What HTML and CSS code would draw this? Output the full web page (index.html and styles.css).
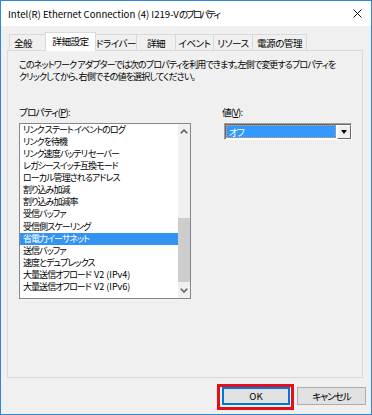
FILE: index.html
```html
<!DOCTYPE html>
<html lang="ja">
<head>
<meta charset="utf-8">
<title>Intel(R) Ethernet Connection (4) I219-Vのプロパティ</title>
<link rel="stylesheet" href="styles.css">
</head>
<body>
<div class="window">
  <div class="titlebar">
    <span class="title">Intel(R) Ethernet Connection (4) I219-V<span class="title-ja">のプロパティ</span></span>
    <svg class="close" width="9" height="9" viewBox="0 0 9 9"><path d="M0.5 0.5 L8.5 8.5 M8.5 0.5 L0.5 8.5" stroke="#111" stroke-width="1" fill="none"/></svg>
  </div>
  <div class="content">
    <div class="tabs">
      <div class="tab tab-general">全般</div>
      <div class="tab tab-advanced active">詳細設定</div>
      <div class="tab tab-driver">ドライバー</div>
      <div class="tab tab-details">詳細</div>
      <div class="tab tab-events">イベント</div>
      <div class="tab tab-resources">リソース</div>
      <div class="tab tab-power">電源の管理</div>
    </div>
    <div class="panel">
      <p class="desc"><span class="desc-line">このネットワーク アダプターでは次のプロパティを利用できます。左側で変更するプロパティを</span><span class="desc-line">クリックしてから、右側でその値を選択してください。</span></p>
      <div class="fields">
        <div class="prop-col">
          <div class="label prop-label">プロパティ(<u>P</u>):</div>
          <div class="listbox">
            <ul class="items">
              <li>リンク ステート イベントのログ</li>
              <li>リンクを待機</li>
              <li>リンク速度バッテリ セーバー</li>
              <li>レガシースイッチ互換モード</li>
              <li>ローカル管理されるアドレス</li>
              <li>割り込み加減</li>
              <li>割り込み加減率</li>
              <li>受信バッファ</li>
              <li>受信側スケーリング</li>
              <li class="selected">省電力イーサネット</li>
              <li>送信バッファ</li>
              <li>速度とデュプレックス</li>
              <li>大量送信オフロード<span class="lat"> V2 (IPv4)</span></li>
              <li>大量送信オフロード<span class="lat"> V2 (IPv6)</span></li>
            </ul>
            <div class="scrollbar">
              <div class="sb-btn"><svg width="8" height="5" viewBox="0 0 8 5"><path d="M0.8 4.2 L4 1 L7.2 4.2" stroke="#505050" stroke-width="1.4" fill="none"/></svg></div>
              <div class="sb-track"><div class="sb-thumb"></div></div>
              <div class="sb-btn"><svg width="8" height="5" viewBox="0 0 8 5"><path d="M0.8 0.8 L4 4 L7.2 0.8" stroke="#505050" stroke-width="1.4" fill="none"/></svg></div>
            </div>
          </div>
        </div>
        <div class="value-col">
          <div class="label value-label">値(<u>V</u>):</div>
          <div class="combo">
            <div class="combo-value"><span class="combo-sel">オフ</span></div>
            <div class="combo-btn"><span class="tri"></span></div>
          </div>
        </div>
      </div>
    </div>
    <div class="buttons">
      <button class="btn btn-default">OK<span class="mark"></span></button>
      <button class="btn btn-cancel">キャンセル</button>
    </div>
  </div>
</div>
</body>
</html>
```
FILE: styles.css
```css
* { box-sizing: border-box; }
html, body { margin: 0; padding: 0; }
body {
  width: 372px;
  height: 415px;
  overflow: hidden;
  font-family: "Noto Sans CJK JP", "Noto Sans", sans-serif;
  font-size: 9.6px;
  font-feature-settings: "palt" 1;
  color: #000;
}
.window {
  width: 372px;
  height: 415px;
  border: 1px solid #2b87d8;
  background: #f0f0f0;
}
.titlebar {
  height: 25px;
  background: #fff;
  display: flex;
  align-items: center;
  padding-left: 7px;
}
.title { white-space: nowrap; line-height: 12px; }
.title-ja { letter-spacing: -2px; }
.close { margin-left: auto; margin-right: 9px; }
.content {
  padding: 6px 8px 0 6px;
}
.tabs {
  display: flex;
  align-items: flex-end;
  height: 18px;
  margin-left: 2px;
  position: relative;
  z-index: 1;
}
.tab {
  height: 16px;
  border: 1px solid #d9d9d9;
  border-bottom: none;
  background: #f0f0f0;
  margin-left: -1px;
  display: flex;
  align-items: center;
  justify-content: center;
  white-space: nowrap;
  line-height: 12px;
  letter-spacing: -0.5px;
}
.tab:first-child { margin-left: 0; }
.tab.active {
  height: 19px;
  margin-bottom: -1px;
  background: #fff;
  position: relative;
  z-index: 2;
  padding-bottom: 2px;
}
.tab-general { width: 37px; justify-content: flex-start; padding-left: 4px; }
.tab-advanced { width: 51px; }
.tab-driver { width: 42px; }
.tab-details { width: 40px; }
.tab-events { width: 39px; }
.tab-resources { width: 40px; }
.tab-power { width: 55px; }
.panel {
  width: 356px;
  height: 328px;
  border: 1px solid #d9d9d9;
  background: #f0f0f0;
}
.desc {
  margin: 0;
  padding: 8px 0 0 11px;
  font-size: 9px;
  white-space: nowrap;
  letter-spacing: -0.85px;
}
.desc-line {
  display: block;
  height: 12.4px;
  line-height: 12.4px;
}
.fields {
  display: flex;
  margin-top: 22px;
  padding-left: 11px;
}
.label { line-height: 12px; white-space: nowrap; letter-spacing: -0.8px; }
.label u { text-decoration-thickness: 1px; text-underline-offset: 1px; }
.prop-col { width: 172px; }
.prop-label { margin-bottom: 5px; }
.listbox {
  height: 176px;
  border: 1px solid #828790;
  background: #fff;
  display: flex;
  overflow: hidden;
}
.items {
  list-style: none;
  margin: 0;
  padding: 0;
  flex: 1;
  overflow: hidden;
}
.items li {
  height: 12.1px;
  line-height: 12.1px;
  padding-left: 3px;
  font-size: 9px;
  white-space: nowrap;
  letter-spacing: -0.95px;
}
.items .lat { letter-spacing: 0; margin-left: 1px; }
.items li.selected {
  background: #3393f0;
  color: #fff;
}
.scrollbar {
  width: 12px;
  background: #f0f0f0;
  display: flex;
  flex-direction: column;
}
.sb-btn {
  height: 15px;
  display: flex;
  align-items: center;
  justify-content: center;
}
.sb-track { flex: 1; }
.sb-thumb {
  margin-top: 79px;
  height: 64px;
  background: #cdcdcd;
}
.value-col { margin-left: 31px; }
.value-label { margin-bottom: 5px; }
.combo {
  margin-left: 2px;
  width: 128px;
  height: 17px;
  display: flex;
  border: 1px solid;
  border-color: #a0a0a0 #ffffff #ffffff #a0a0a0;
  box-shadow: inset 1px 1px 0 #696969;
  background: #fff;
  padding: 1px 0 0 1px;
}
.combo-value {
  flex: 1;
  padding: 0 1px 1px 0;
}
.combo-sel {
  display: block;
  height: 100%;
  background: #3399ff;
  color: #fff;
  border: 1px dotted #e8a050;
  line-height: 12px;
  padding-left: 2px;
  letter-spacing: -1px;
}
.combo-btn {
  width: 14px;
  background: #f0f0f0;
  border: 1px solid;
  border-color: #ffffff #696969 #696969 #ffffff;
  display: flex;
  align-items: center;
  justify-content: center;
}
.tri {
  width: 0;
  height: 0;
  border-left: 3.5px solid transparent;
  border-right: 3.5px solid transparent;
  border-top: 4px solid #000;
}
.buttons {
  display: flex;
  justify-content: flex-end;
  gap: 7px;
  margin-top: 9px;
  margin-right: -3px;
}
.btn {
  font: inherit;
  font-feature-settings: "palt" 1;
  height: 18px;
  padding: 0;
  background: #e1e1e1;
  border: 1px solid #adadad;
  color: #000;
  line-height: 14px;
}
.btn-default {
  width: 68px;
  position: relative;
  border-color: #0078d7;
  box-shadow: inset 0 0 0 1px #0078d7;
}
.btn-cancel { width: 69px; letter-spacing: -1px; }
.mark {
  position: absolute;
  left: -6px;
  top: -4px;
  right: -5px;
  bottom: -6px;
  border: 3px solid #e2101b;
}
```
